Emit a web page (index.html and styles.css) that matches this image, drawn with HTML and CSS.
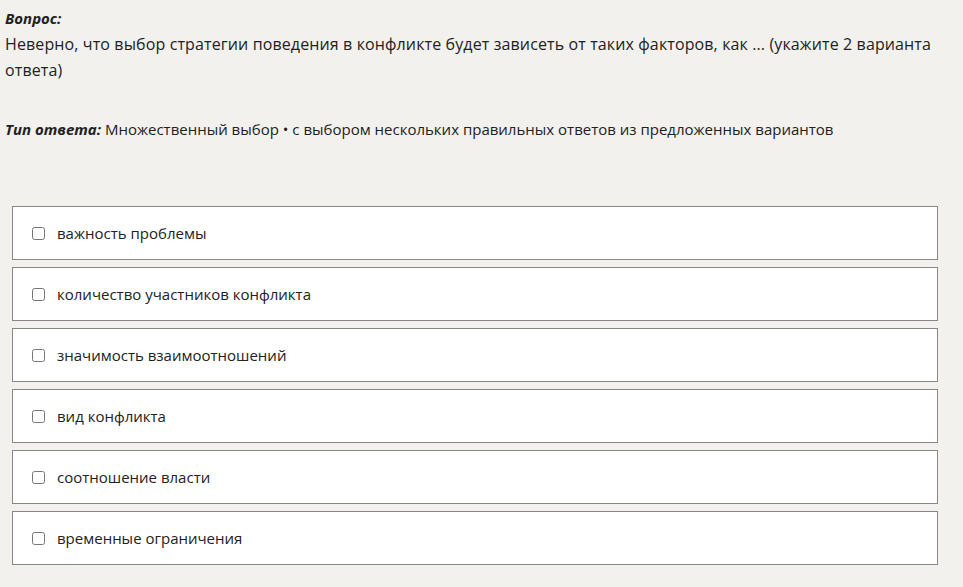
FILE: index.html
```html
<!DOCTYPE html>
<html>
  <head>
    <title>Вопрос</title>
    <link rel="stylesheet" href="styles.css">
  </head>
  <body>
    <div class="question">
      <div class="label">Вопрос:</div>
      <div class="text">Неверно, что выбор стратегии поведения в конфликте будет зависеть от таких факторов, как ... (укажите 2 варианта ответа)</div>
    </div>
    <div class="type">
      <span class="label">Тип ответа:</span> Множественный выбор • с выбором нескольких правильных ответов из предложенных вариантов
    </div>
    <div class="answers">
      <label class="answer"><input type="checkbox"> <span>важность проблемы</span></label>
      <label class="answer"><input type="checkbox"> <span>количество участников конфликта</span></label>
      <label class="answer"><input type="checkbox"> <span>значимость взаимоотношений</span></label>
      <label class="answer"><input type="checkbox"> <span>вид конфликта</span></label>
      <label class="answer"><input type="checkbox"> <span>соотношение власти</span></label>
      <label class="answer"><input type="checkbox"> <span>временные ограничения</span></label>
    </div>
  </body>
</html>
```

FILE: styles.css
```css
body {
  font-family: "Open Sans", "Noto Sans", sans-serif;
  background-color: #f2f1ee;
  color: #222;
  margin: 0;
  padding: 5px 25px 0 5px;
  font-size: 16px;
  line-height: 26px;
}
.label {
  font-weight: bold;
  font-style: italic;
  font-size: 15px;
}
.question .text {
  letter-spacing: 0.12px;
}
.type {
  margin-top: 33px;
  font-size: 15px;
}
.answers {
  margin-top: 64px;
  padding-left: 7px;
}
.answer {
  display: flex;
  align-items: center;
  height: 52px;
  border: 1px solid #878787;
  background-color: #fff;
  margin-bottom: 7px;
  padding-left: 19px;
  font-size: 15px;
}
.answer input {
  width: 13px;
  height: 13px;
  margin: 0 12px 0 0;
}
```
